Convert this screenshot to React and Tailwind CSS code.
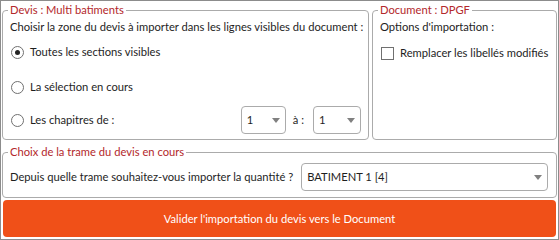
import { useState } from 'react';

const Radio = ({ checked, label, onClick }) => (
    <label onClick={onClick} className="flex items-center gap-[6px] ml-[1px] cursor-pointer">
        <span className="w-[13px] h-[13px] rounded-full border border-[#707070] bg-white flex items-center justify-center">
            {checked && <span className="w-[5px] h-[5px] rounded-full bg-[#222]"></span>}
        </span>
        <span>{label}</span>
    </label>
);

const Select = ({ value, className }) => (
    <div className={`flex items-center justify-between border border-[#ababab] rounded-[4px] bg-white pl-[5px] pr-[5px] ${className}`}>
        <span>{value}</span>
        <svg width="8" height="5" viewBox="0 0 8 5"><path d="M0 0h8L4 5z" fill="#808080" /></svg>
    </div>
);

const App = () => {
    const [zone, setZone] = useState('all');
    const [replace, setReplace] = useState(false);

    return (
        <div className="w-[559px] h-[240px] border border-[#8c8c8c] bg-white text-[11.2px] leading-[16px] text-[#1e1e1e] flex flex-col px-[1px] pt-[1px] whitespace-nowrap" style={{ fontFamily: 'Lato, sans-serif' }}>
            <div className="flex gap-[3px] h-[138px] shrink-0">
                <fieldset className="w-[367px] min-w-0 border border-[#ababab] rounded-[4px] pl-[7px] pr-[7px]">
                    <legend className="-ml-[2px] px-[2px] text-[#b3282b]">Devis : Multi batiments</legend>
                    <div className="mt-[1px]">Choisir la zone du devis à importer dans les lignes visibles du document :</div>
                    <div className="mt-[9px]">
                        <Radio checked={zone === 'all'} label="Toutes les sections visibles" onClick={() => setZone('all')} />
                    </div>
                    <div className="mt-[19px]">
                        <Radio checked={zone === 'sel'} label="La sélection en cours" onClick={() => setZone('sel')} />
                    </div>
                    <div className="flex items-center justify-between mt-[11px]">
                        <Radio checked={zone === 'chap'} label="Les chapitres de :" onClick={() => setZone('chap')} />
                        <div className="flex items-center">
                            <Select value="1" className="w-[45px] h-[28px]" />
                            <span className="ml-[7px] mr-[9px]">à :</span>
                            <Select value="1" className="w-[48px] h-[28px]" />
                        </div>
                    </div>
                </fieldset>
                <fieldset className="flex-1 min-w-0 border border-[#ababab] rounded-[4px] pl-[7px]">
                    <legend className="-ml-[2px] px-[2px] text-[#b3282b]">Document : DPGF</legend>
                    <div className="mt-[1px]">Options d'importation :</div>
                    <label onClick={() => setReplace(!replace)} className="flex items-center gap-[6px] mt-[10px] ml-[1px] cursor-pointer">
                        <span className="w-[13px] h-[13px] border border-[#707070] bg-white flex items-center justify-center text-[10px]">{replace ? '✓' : ''}</span>
                        <span>Remplacer les libellés modifiés</span>
                    </label>
                </fieldset>
            </div>
            <fieldset className="mt-[4px] h-[54px] shrink-0 min-w-0 border border-[#ababab] rounded-[4px] pl-[7px] pr-[8px]">
                <legend className="-ml-[2px] px-[2px] text-[#b3282b]">Choix de la trame du devis en cours</legend>
                <div className="flex items-center gap-[8px] mt-[3px]">
                    <span>Depuis quelle trame souhaitez-vous importer la quantité ?</span>
                    <Select value="BATIMENT 1 [4]" className="flex-1 h-[28px]" />
                </div>
            </fieldset>
            <button className="mt-[2px] mx-[1px] h-[37px] shrink-0 rounded-[4px] bg-[#f05018] text-white text-[11.2px]">
                Valider l'importation du devis vers le Document
            </button>
        </div>
    );
};

export default App;
